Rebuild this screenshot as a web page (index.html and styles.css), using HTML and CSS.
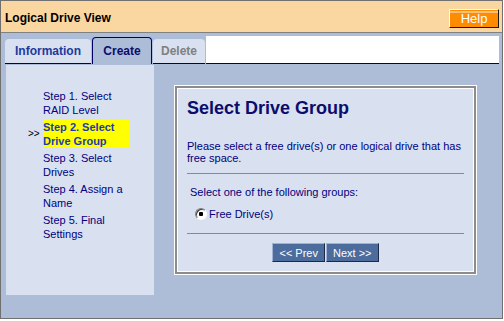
FILE: index.html
```html
<!DOCTYPE html>
<html lang="en">

<head>
    <meta charset="UTF-8" />
    <meta name="viewport" content="width=device-width, initial-scale=1" />
    <title>Logical Drive View</title>
    <link rel="stylesheet" href="styles.css">
</head>
<body>
    <div class="window">
        <div class="titlebar">
            <span class="title">Logical Drive View</span>
            <button class="help-button">Help</button>
        </div>

        <div class="window-body">
            <div class="tabs">
                <a class="tab tab-info">Information</a>
                <a class="tab tab-create tab-active">Create</a>
                <span class="tab tab-delete tab-disabled">Delete</span>
                <div class="tab-fill"></div>
            </div>

            <div class="content">
                <ul class="steps">
                    <li class="step">
                        <span class="step-mark"></span>
                        <span class="step-text">Step 1. Select RAID Level</span>
                    </li>
                    <li class="step step-current">
                        <span class="step-mark">&gt;&gt;</span>
                        <span class="step-text">Step 2. Select Drive Group</span>
                    </li>
                    <li class="step">
                        <span class="step-mark"></span>
                        <span class="step-text">Step 3. Select Drives</span>
                    </li>
                    <li class="step">
                        <span class="step-mark"></span>
                        <span class="step-text">Step 4. Assign a Name</span>
                    </li>
                    <li class="step">
                        <span class="step-mark"></span>
                        <span class="step-text">Step 5. Final Settings</span>
                    </li>
                </ul>

                <div class="main">
                    <div class="card">
                        <h2 class="card-title">Select Drive Group</h2>
                        <p class="card-text">Please select a free drive(s) or one logical drive that has free space.</p>
                        <div class="divider"></div>
                        <p class="group-label">Select one of the following groups:</p>
                        <label class="radio-row">
                            <input type="radio" name="group" class="radio" checked>
                            Free Drive(s)
                        </label>
                        <div class="divider divider-bottom"></div>
                        <div class="nav-buttons">
                            <button class="nav-button">&lt;&lt; Prev</button>
                            <button class="nav-button">Next &gt;&gt;</button>
                        </div>
                    </div>
                </div>
            </div>
        </div>
    </div>
</body>
</html>
```

FILE: styles.css
```css
body {
    margin: 0;
    padding: 0;
    font-family: 'Liberation Sans', Arial, sans-serif;
    background: #ffffff;
}

.window {
    width: 503px;
    height: 319px;
    box-sizing: border-box;
    border: 1px solid #707070;
    display: flex;
    flex-direction: column;
    background: #adbdd8;
}

.titlebar {
    height: 28px;
    padding: 3px 4px 0 4px;
    background: #fad6a0;
    border-bottom: 1px solid #808080;
    display: flex;
    align-items: center;
    justify-content: space-between;
    flex-shrink: 0;
}

.title {
    font-size: 12px;
    font-weight: 700;
    color: #000000;
}

.help-button {
    width: 50px;
    height: 19px;
    padding: 0;
    margin-right: -1px;
    background: #ff8c00;
    color: #ffffff;
    font-family: inherit;
    font-size: 13px;
    border: 1px solid;
    border-color: #ffffff #1a1a1a #1a1a1a #ffffff;
    box-shadow: inset 0 1px 0 #ff8c00, inset 0 3px 0 #ffc078;
    cursor: pointer;
}

.window-body {
    flex-grow: 1;
    padding: 3px 3px 0 4px;
}

.tabs {
    display: flex;
    align-items: flex-end;
    gap: 1px;
    height: 28px;
}

.tab {
    height: 24px;
    line-height: 24px;
    text-align: center;
    font-size: 12px;
    font-weight: 700;
    color: #1c3aa0;
    background: #d9e0ef;
    border-bottom: 1px solid #000066;
    border-radius: 4px 4px 0 0;
    text-decoration: none;
    cursor: pointer;
}

.tab-info {
    width: 86px;
}

.tab-create {
    width: 58px;
}

.tab-delete {
    width: 52px;
}

.tab-active {
    height: 26px;
    line-height: 26px;
    color: #0c0c6c;
    background: #adbdd8;
    border: 1px solid #000066;
    border-bottom: none;
}

.tab-disabled {
    color: #808080;
    cursor: default;
}

.tab-fill {
    flex-grow: 1;
    height: 27px;
    background: #ffffff;
    border-bottom: 1px solid #000066;
}

.content {
    display: flex;
    margin-top: 1px;
}

.steps {
    width: 148px;
    height: 230px;
    box-sizing: border-box;
    margin: 0 0 0 1px;
    padding: 24px 0 0 22px;
    list-style: none;
    background: #d9e0ef;
}

.step {
    display: flex;
    align-items: center;
    margin-bottom: 3px;
}

.step-mark {
    width: 15px;
    flex-shrink: 0;
    font-size: 10px;
    line-height: 12px;
    color: #000000;
}

.step-text {
    width: 86px;
    font-size: 11px;
    line-height: 14px;
    color: #000080;
}

.step-current .step-text {
    font-weight: 700;
    color: #1c3ab0;
    background: #ffff00;
}

.main {
    flex-grow: 1;
    padding: 21px 0 0 21px;
}

.card {
    width: 301px;
    box-sizing: border-box;
    padding: 9px 10px 10px 10px;
    background: #d9e0ef;
    border: 2px solid #8c8c8c;
    outline: 1px solid #ffffff;
    box-shadow: inset 0 0 0 1px #ffffff;
}

.card-title {
    margin: 0;
    font-size: 18px;
    line-height: 22px;
    font-weight: 700;
    color: #0c0c6c;
}

.card-text {
    margin: 21px 0 0 0;
    font-size: 11px;
    line-height: 12px;
    color: #000080;
}

.divider {
    margin-top: 9px;
    border-top: 1px solid #8a8a8a;
}

.divider-bottom {
    margin-top: 13px;
}

.group-label {
    margin: 12px 0 0 3px;
    font-size: 11px;
    line-height: 13px;
    color: #000080;
}

.radio-row {
    display: flex;
    align-items: center;
    height: 13px;
    margin-top: 8px;
    padding-left: 8px;
    font-size: 11px;
    color: #000080;
}

.radio {
    appearance: none;
    width: 12px;
    height: 12px;
    margin: 0 2px 0 0;
    border-radius: 50%;
    border: 1px solid;
    border-color: #808080 #ffffff #ffffff #808080;
    background: radial-gradient(circle, #000000 0 2px, #ffffff 2.5px);
    box-shadow: inset 1px 1px 0 #404040;
    box-sizing: border-box;
}

.nav-buttons {
    display: flex;
    justify-content: center;
    gap: 1px;
    margin-top: 9px;
}

.nav-button {
    height: 19px;
    padding: 0 6px;
    font-family: inherit;
    font-size: 11px;
    color: #ffffff;
    background: #4d6c9e;
    border: 1px solid;
    border-color: #9fb2d4 #1c2a48 #1c2a48 #9fb2d4;
    cursor: pointer;
}
```
